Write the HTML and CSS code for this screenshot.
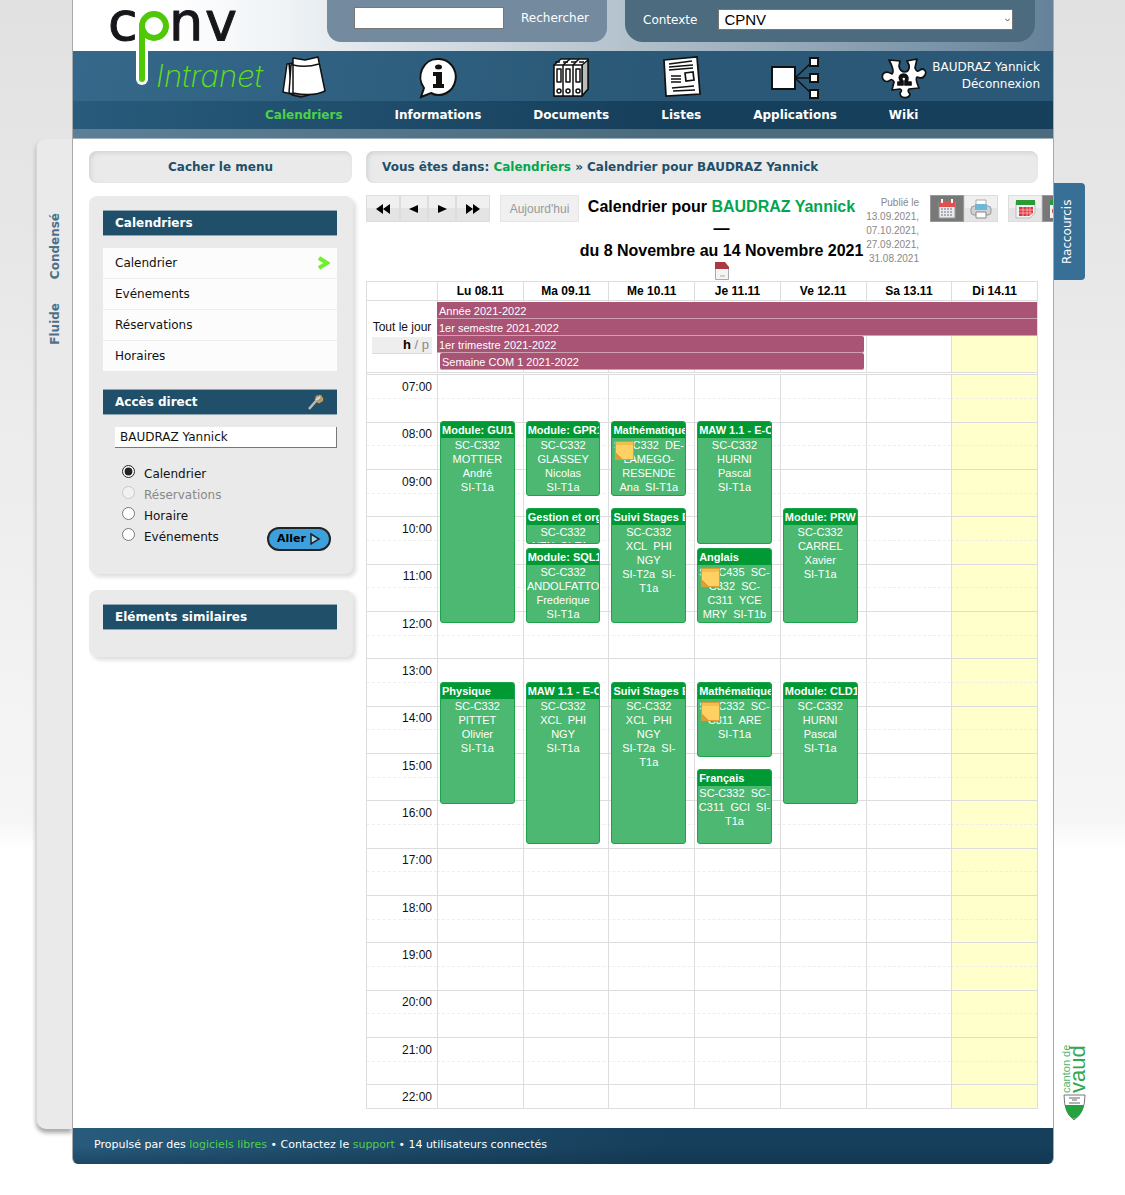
FILE: index.html
```html
<!DOCTYPE html>
<html lang="fr">
<head>
<meta charset="utf-8">
<title>CPNV Intranet - Calendriers</title>
<meta name="viewport" content="width=device-width, initial-scale=1">
<link rel="stylesheet" href="styles.css">
</head>
<body>
<div class="layout">
  <nav class="strip" aria-label="Affichage">
    <a href="#" class="strip-link">Condensé</a>
    <a href="#" class="strip-link">Fluide</a>
  </nav>

  <div class="page">
    <header class="header">
      <a href="#" class="logo" aria-label="CPNV Intranet">
        <svg width="180" height="92" viewBox="0 0 180 92">
          <text class="logo-letters" y="40"><tspan x="3">c</tspan><tspan x="64">n</tspan><tspan x="100">v</tspan></text>
          <path d="M37 26V79" stroke="#fff" stroke-width="12" stroke-linecap="round"/>
          <ellipse cx="49" cy="26" rx="12" ry="12" fill="#fff" stroke="#fff" stroke-width="8"/>
          <ellipse cx="49" cy="26" rx="12" ry="12" fill="none" stroke="#4fc808" stroke-width="6"/>
          <path d="M37 26V79" stroke="#4fc808" stroke-width="6" stroke-linecap="round"/>
          <text class="logo-sub" x="51" y="87">Intranet</text>
        </svg>
      </a>
      <div class="topbar">
        <form class="search">
          <input type="text" class="search-input" aria-label="Recherche">
          <button type="button" class="search-button">Rechercher</button>
        </form>
        <form class="context">
          <label for="contexte">Contexte</label>
          <div class="select-wrap">
            <select id="contexte" class="context-select"><option>CPNV</option></select>
            <svg class="chevron" width="5" height="4" viewBox="0 0 5 4"><path d="M0 .5 2.500 3 5 .5" fill="none" stroke="#555"/></svg>
          </div>
        </form>
      </div>
      <nav class="mainnav" aria-label="Principal">
        <a href="#" class="nav-item current">
          <svg width="46" height="46" viewBox="0 0 46 46" stroke="#111" stroke-width="1.500" stroke-linejoin="round" fill="#fff">
            <path d="M6 10 12 9 14 41 2 38Z"/><path d="M8 10 11 41 20 43 28 41Z" fill="#666"/><path d="M10 11 13 10V40L8 39Z"/><path d="M12 4 24 6 37 3 44 37Q32 43 12 39Z"/><path d="M12 11Q25 14 38 10" fill="none"/>
          </svg>
          <span>Calendriers</span></a>
        <a href="#" class="nav-item">
          <svg width="46" height="46" viewBox="0 0 46 46">
            <path d="M23 5a17 18 0 1 1-7 34L6 43 9 34A17 18 0 0 1 23 5Z" fill="#fff" stroke="#111" stroke-width="2"/>
            <ellipse cx="23.500" cy="13" rx="3.500" ry="2.500" fill="#111"/>
            <path d="M18 18h9v12h2v4H18v-4h3v-8h-3Z" fill="#111"/>
          </svg>
          <span>Informations</span></a>
        <a href="#" class="nav-item">
          <svg width="46" height="46" viewBox="0 0 46 46" fill="#fff" stroke="#111" stroke-width="1.500" stroke-linejoin="round">
            <path d="M6 11 13 5H40V35L34 42H6Z"/><path d="M34 42 40 35V6L34 11Z" fill="#bbb"/><path d="M6 11H34V42H6ZM15 11V42M25 11V42M15 11 22 5M25 11 31 5"/><path d="M9 15h4v13H9ZM18 15h4v13h-4ZM28 15h4v13h-4Z"/><path d="M7 8h32" stroke-dasharray="5 3"/>
            <circle cx="11" cy="37" r="2"/><circle cx="20" cy="37" r="2"/><circle cx="30" cy="37" r="2"/>
          </svg>
          <span>Documents</span></a>
        <a href="#" class="nav-item">
          <svg width="46" height="46" viewBox="0 0 46 46" fill="none" stroke="#111" stroke-width="1.700">
            <path d="M6 6 39 3 42 40 8 42Z" fill="#fff"/><path d="M11 10 34 7M11 13 35 11M11 16 35 14M13 22h10M13 25h10M13 28h10M14 34 36 32M15 37 37 36"/><path d="M27 19 35 18 36 26 28 27Z"/>
          </svg>
          <span>Listes</span></a>
        <a href="#" class="nav-item">
          <svg width="50" height="46" viewBox="0 0 50 46" fill="#fff" stroke="#111" stroke-width="2">
            <path d="M25 24 42 8M25 24H42M25 24 42 40" stroke-width="1.500"/><path d="M2 13H25V35H2ZM40 4h8v8h-8ZM40 20h8v8h-8ZM40 36h8v8h-8Z"/>
          </svg>
          <span>Applications</span></a>
        <a href="#" class="nav-item">
          <svg width="46" height="46" viewBox="0 0 46 46" fill="#fff" stroke="#111" stroke-width="1.700" stroke-linejoin="round">
            <path d="M8 6 19 7 18 12Q19 18 24 18 29 17 28 11L26 7 36 5 34 14Q36 19 39 16C43 13 46 18 44 21 42 25 38 24 36 23Q34 25 38 34L28 35Q26 37 29 40C28 45 19 45 19 39Q22 36 19 35L11 36 13 28Q11 24 8 27C3 29 0 24 2 20 5 16 9 19 11 20Q14 17 8 6Z"/>
            <path d="M17 31V28H20C13 18 31 17 26 28H30V31H24V27C28 21 17 22 22 27V31Z" fill="#111"/>
          </svg>
          <span>Wiki</span></a>
        <div class="user">
          <a href="#">BAUDRAZ Yannick</a>
          <a href="#">Déconnexion</a>
        </div>
      </nav>
    </header>

    <main class="content">
      <div class="bar bar-toggle"><a href="#">Cacher le menu</a></div>
      <div class="bar">Vous êtes dans:&nbsp;<a href="#" class="green">Calendriers</a>&nbsp;» Calendrier pour BAUDRAZ Yannick</div>

      <aside class="sidebar">
        <section class="card">
          <h2 class="card-title">Calendriers</h2>
          <ul class="menu">
            <li><a href="#">Calendrier<svg width="12" height="14" viewBox="0 0 12 14"><path d="M1 2 9 7 1 12" fill="none" stroke="#6df12b" stroke-width="4"/></svg></a></li>
            <li><a href="#">Evénements</a></li>
            <li><a href="#">Réservations</a></li>
            <li><a href="#">Horaires</a></li>
          </ul>
          <h2 class="card-title">Accès direct
            <svg width="18" height="18" viewBox="0 0 18 18"><circle cx="12" cy="6" r="3.500" fill="#999" stroke="#e39a35" stroke-width="1.500" stroke-dasharray="3 1"/><path d="M2 16 9 8" stroke="#bbb" stroke-width="2.500"/><path d="M9 7 13 4" stroke="#ddd" stroke-width="2"/></svg>
          </h2>
          <form class="direct">
            <input type="text" class="direct-input" value="BAUDRAZ Yannick" aria-label="Personne">
            <div class="direct-row">
              <div class="radios">
                <label><input type="radio" name="vue" checked>Calendrier</label>
                <label class="off"><input type="radio" name="vue" disabled>Réservations</label>
                <label><input type="radio" name="vue">Horaire</label>
                <label><input type="radio" name="vue">Evénements</label>
              </div>
              <button type="button" class="go">Aller<svg width="12" height="14" viewBox="0 0 12 14"><path d="M2 2 10 7 2 12Z" fill="#9fd4f5" stroke="#222" stroke-width="1.500"/></svg></button>
            </div>
          </form>
        </section>
        <section class="card card-small">
          <h2 class="card-title">Eléments similaires</h2>
        </section>
      </aside>

      <section class="calendar">
        <div class="toolbar">
          <div class="group arrows">
            <button type="button" aria-label="Année précédente"><svg width="16" height="12" viewBox="0 0 16 12"><path d="M8 1V11L1 6ZM15 1V11L8 6Z"/></svg></button>
            <button type="button" class="narrow" aria-label="Semaine précédente"><svg width="10" height="10" viewBox="0 0 10 10"><path d="M9 1V9L0 5Z"/></svg></button>
            <button type="button" class="narrow" aria-label="Semaine suivante"><svg width="10" height="10" viewBox="0 0 10 10"><path d="M1 1V9L10 5Z"/></svg></button>
            <button type="button" aria-label="Année suivante"><svg width="16" height="12" viewBox="0 0 16 12"><path d="M1 1V11L8 6ZM8 1V11L15 6Z"/></svg></button>
          </div>
          <button type="button" class="today" disabled>Aujourd'hui</button>
          <h1 class="title">Calendrier pour <a href="#" class="green">BAUDRAZ Yannick</a><br>—<br>du 8 Novembre au 14 Novembre 2021<br>
            <svg width="14" height="18" viewBox="0 0 14 18"><path d="M.5 2.500H10L13.500 6V17.500H.5Z" fill="#f4f4f4" stroke="#aaa"/><path d="M0 0H10L14 5V7H0Z" fill="#a93a42"/><path d="M5 14h5" stroke="#aaa"/></svg>
          </h1>
          <p class="published">Publié le<br>13.09.2021,<br>07.10.2021,<br>27.09.2021,<br>31.08.2021</p>
          <div class="group">
            <button type="button" class="on" aria-label="Vue calendrier"><svg width="18" height="20" viewBox="0 0 18 20"><path d="M1 3H17V19H1Z" fill="#e8ecec" stroke="#999"/><path d="M1 2H17V8H1Z" fill="#e2504d"/><path d="M4 0v4M14 0v4" stroke="#fff" stroke-width="2"/><path d="M3 10h12M3 13h12M3 16h12" stroke="#aab" stroke-width="2" stroke-dasharray="2 1"/></svg></button>
            <button type="button" aria-label="Imprimer"><svg width="22" height="20" viewBox="0 0 22 20"><path d="M6 1H16V8H6Z" fill="#fff" stroke="#aaa"/><rect x="1" y="7" width="20" height="9" rx="3" fill="#ccd2d8" stroke="#999"/><path d="M5 5H17V11H5Z" fill="#6fb7d6"/><path d="M6 13H16V19H6Z" fill="#fff" stroke="#888"/></svg></button>
          </div>
          <div class="group">
            <button type="button" aria-label="Mois"><svg width="21" height="20" viewBox="0 0 21 20"><path d="M1 3H20V14L15 19H1Z" fill="#f3f3f3" stroke="#bbb"/><path d="M1 1H20V6H1Z" fill="#2d9a35"/><path d="M4 8H18V14L14 17H4Z" fill="#dc3742"/><path d="M4 11h14M4 14h13M8 8v9M12 8v9M15 8v8" stroke="#f5a5a5"/></svg></button>
            <button type="button" class="on" aria-label="Semaine"><svg width="21" height="20" viewBox="0 0 21 20"><path d="M1 3H20V14L15 19H1Z" fill="#f3f3f3"/><path d="M1 1H20V6H1Z" fill="#2d9a35"/><circle cx="6" cy="12" r="3" fill="#dc3742"/></svg></button>
          </div>
        </div>

        <table class="days">
          <thead>
            <tr><td class="time"></td><th>Lu 08.11</th><th>Ma 09.11</th><th>Me 10.11</th><th>Je 11.11</th><th>Ve 12.11</th><th>Sa 13.11</th><th>Di 14.11</th></tr>
          </thead>
          <tbody>
            <tr>
              <th class="time allday">Tout le jour<span class="hp"><b>h</b> / p</span></th>
              <td colspan="7" class="allday-cell">
                <div class="allday-grid">
                  <i class="line d1"></i><i class="line d2"></i><i class="line d3"></i><i class="line d4"></i><i class="line d5"></i><i class="line d6"></i><i class="line d7 sun"></i>
                  <a href="#" class="bar-event r1">Année 2021-2022</a>
                  <a href="#" class="bar-event r2">1er semestre 2021-2022</a>
                  <a href="#" class="bar-event r3">1er trimestre 2021-2022</a>
                  <a href="#" class="bar-event r4">Semaine COM 1 2021-2022</a>
                </div>
              </td>
            </tr>
          </tbody>
        </table>

        <div class="agenda">
          <table class="slots">
            <tbody>
              <tr><th>07:00</th><td colspan="6"></td><td class="sun"></td></tr><tr><th></th><td colspan="6"></td><td class="sun"></td></tr>
              <tr><th>08:00</th><td colspan="6"></td><td class="sun"></td></tr><tr><th></th><td colspan="6"></td><td class="sun"></td></tr>
              <tr><th>09:00</th><td colspan="6"></td><td class="sun"></td></tr><tr><th></th><td colspan="6"></td><td class="sun"></td></tr>
              <tr><th>10:00</th><td colspan="6"></td><td class="sun"></td></tr><tr><th></th><td colspan="6"></td><td class="sun"></td></tr>
              <tr><th>11:00</th><td colspan="6"></td><td class="sun"></td></tr><tr><th></th><td colspan="6"></td><td class="sun"></td></tr>
              <tr><th>12:00</th><td colspan="6"></td><td class="sun"></td></tr><tr><th></th><td colspan="6"></td><td class="sun"></td></tr>
              <tr><th>13:00</th><td colspan="6"></td><td class="sun"></td></tr><tr><th></th><td colspan="6"></td><td class="sun"></td></tr>
              <tr><th>14:00</th><td colspan="6"></td><td class="sun"></td></tr><tr><th></th><td colspan="6"></td><td class="sun"></td></tr>
              <tr><th>15:00</th><td colspan="6"></td><td class="sun"></td></tr><tr><th></th><td colspan="6"></td><td class="sun"></td></tr>
              <tr><th>16:00</th><td colspan="6"></td><td class="sun"></td></tr><tr><th></th><td colspan="6"></td><td class="sun"></td></tr>
              <tr><th>17:00</th><td colspan="6"></td><td class="sun"></td></tr><tr><th></th><td colspan="6"></td><td class="sun"></td></tr>
              <tr><th>18:00</th><td colspan="6"></td><td class="sun"></td></tr><tr><th></th><td colspan="6"></td><td class="sun"></td></tr>
              <tr><th>19:00</th><td colspan="6"></td><td class="sun"></td></tr><tr><th></th><td colspan="6"></td><td class="sun"></td></tr>
              <tr><th>20:00</th><td colspan="6"></td><td class="sun"></td></tr><tr><th></th><td colspan="6"></td><td class="sun"></td></tr>
              <tr><th>21:00</th><td colspan="6"></td><td class="sun"></td></tr><tr><th></th><td colspan="6"></td><td class="sun"></td></tr>
              <tr><th>22:00</th><td colspan="6"></td><td class="sun"></td></tr>
            </tbody>
          </table>
          <!-- Each day is cut into 5-minute rows counted from 07:00 -->
          <div class="columns">
            <div class="day">
              <article class="event" style="grid-row:13/64"><h3>Module: GUI1</h3><p>SC-C332<br>MOTTIER<br>André<br>SI-T1a</p></article>
              <article class="event" style="grid-row:79/110"><h3>Physique</h3><p>SC-C332<br>PITTET<br>Olivier<br>SI-T1a</p></article>
            </div>
            <div class="day">
              <article class="event" style="grid-row:13/32"><h3>Module: GPR1</h3><p>SC-C332<br>GLASSEY<br>Nicolas<br>SI-T1a</p></article>
              <article class="event" style="grid-row:35/44"><h3>Gestion et org</h3><p>SC-C332<br>YZN&nbsp; SI-T1a</p></article>
              <article class="event" style="grid-row:45/64"><h3>Module: SQL1</h3><p>SC-C332<br>ANDOLFATTO<br>Frederique<br>SI-T1a</p></article>
              <article class="event" style="grid-row:79/120"><h3>MAW 1.1 - E-C</h3><p>SC-C332<br>XCL&nbsp; PHI<br>NGY<br>SI-T1a</p></article>
            </div>
            <div class="day">
              <article class="event noted" style="grid-row:13/32"><h3>Mathématique</h3><p>SC-C332&nbsp; DE-<br>LAMEGO-<br>RESENDE<br>Ana&nbsp; SI-T1a</p></article>
              <article class="event" style="grid-row:35/64"><h3>Suivi Stages E</h3><p>SC-C332<br>XCL&nbsp; PHI<br>NGY<br>SI-T2a&nbsp; SI-<br>T1a</p></article>
              <article class="event" style="grid-row:79/120"><h3>Suivi Stages E</h3><p>SC-C332<br>XCL&nbsp; PHI<br>NGY<br>SI-T2a&nbsp; SI-<br>T1a</p></article>
            </div>
            <div class="day">
              <article class="event" style="grid-row:13/44"><h3>MAW 1.1 - E-C</h3><p>SC-C332<br>HURNI<br>Pascal<br>SI-T1a</p></article>
              <article class="event noted" style="grid-row:45/64"><h3>Anglais</h3><p>SC-C435&nbsp; SC-<br>C332&nbsp; SC-<br>C311&nbsp; YCE<br>MRY&nbsp; SI-T1b</p></article>
              <article class="event noted" style="grid-row:79/98"><h3>Mathématique</h3><p>SC-C332&nbsp; SC-<br>C311&nbsp; ARE<br>SI-T1a</p></article>
              <article class="event" style="grid-row:101/120"><h3>Français</h3><p>SC-C332&nbsp; SC-<br>C311&nbsp; GCI&nbsp; SI-<br>T1a</p></article>
            </div>
            <div class="day">
              <article class="event" style="grid-row:35/64"><h3>Module: PRW</h3><p>SC-C332<br>CARREL<br>Xavier<br>SI-T1a</p></article>
              <article class="event" style="grid-row:79/110"><h3>Module: CLD1</h3><p>SC-C332<br>HURNI<br>Pascal<br>SI-T1a</p></article>
            </div>
            <div class="day"></div>
            <div class="day"></div>
          </div>
        </div>
      </section>
    </main>

    <footer class="footer">Propulsé par des <a href="#">logiciels libres</a> • Contactez le <a href="#">support</a> • 14 utilisateurs connectés</footer>
  </div>

  <div class="right">
    <a href="#" class="shortcuts">Raccourcis</a>
    <svg class="vaud" width="26" height="78" viewBox="0 0 26 78">
      <text class="vaud-small" transform="translate(8 50) rotate(-90)">canton de</text>
      <text class="vaud-big" transform="translate(23 50) rotate(-90)">vaud</text>
      <path d="M2 52H23Q23 70 12 77 2 70 2 52Z" fill="#fff" stroke="#777"/>
      <path d="M3 62H22Q20 72 12 76 4 72 3 62Z" fill="#23a33f"/>
      <path d="M7 55h11M10 57h5M7 60h11" stroke="#666"/>
    </svg>
  </div>
</div>
</body>
</html>
```
FILE: styles.css
```css
* { box-sizing: border-box; }
body {
  margin: 0;
  font: 12px/16px "DejaVu Sans", Verdana, sans-serif;
  color: #111;
  background: #fff linear-gradient(#e1e1e1, #f6f6f6 820px, #fff 850px) no-repeat;
}
a { color: inherit; text-decoration: none; }
h1, h2, h3, p, ul { margin: 0; padding: 0; }
button, input, select { font: inherit; color: inherit; }
.green { color: #00a650; }

.layout {
  display: grid;
  grid-template-columns: 36px minmax(0, 1fr) 71px;
  padding: 0 0 31px 36px;
}

/* Left strip */
.strip {
  margin: 139px 0 35px;
  padding-top: 74px;
  display: flex;
  flex-direction: column;
  align-items: center;
  gap: 24px;
  background: #eaeaea;
  border-left: 1px solid #d8d8d8;
  border-radius: 8px 0 0 10px;
  box-shadow: 0 4px 4px #aaa;
}
.strip-link {
  writing-mode: vertical-rl;
  transform: rotate(180deg);
  font-weight: bold;
  font-size: 12px;
  color: #4d7188;
}

/* Header */
.page { position: relative; background: #fff; border: solid #aaa; border-width: 0 1px; border-radius: 0 0 6px 6px; overflow: hidden; }
.header { background: linear-gradient(90deg, #fff 10%, #eef2f5 22%, #a9bac6 62%, #66829a); }
.logo { position: absolute; left: 32px; top: 0; }
.logo svg { display: block; overflow: visible; }
.logo-letters { font: 54px "DejaVu Sans", sans-serif; fill: #17171b; stroke: #17171b; stroke-width: 1px; stroke-linejoin: round; }
.logo-sub { font: italic 200 31px Inter, sans-serif; fill: #5fe01c; }
.topbar { display: flex; justify-content: flex-end; gap: 18px; height: 51px; padding-right: 18px; }
.search, .context { height: 42px; display: flex; color: #fff; }
.search { width: 280px; padding: 7px 18px 0 27px; gap: 17px; align-items: flex-start; background: #748a9e; border-radius: 0 0 14px 14px; }
.search-input { flex: 1; min-width: 0; height: 22px; border: 1px solid #777; background: #fff; padding: 0 4px; }
.search-button { padding: 3px 0; border: 0; background: none; }
.context { width: 410px; padding: 9px 22px 0 18px; gap: 21px; background: #4c6b7e; border-radius: 0 0 18px 18px; }
.context label { padding-top: 3px; }
.select-wrap { position: relative; flex: 1; height: 21px; }
.context-select { appearance: none; width: 100%; height: 21px; padding: 0 5px; border: 1px solid #777; border-radius: 0; background: #fff; color: #000; font: 15px/18px "Liberation Sans", Arial, sans-serif; }
.chevron { position: absolute; right: 3px; top: 9px; }
.mainnav {
  display: flex;
  gap: 52px;
  height: 88px;
  padding: 0 13px 0 192px;
  color: #fff;
  border-bottom: 1px solid #9fb0bc;
  background:
    linear-gradient(90deg, #5d7f96, #4c6b7e 60%) 0 78px / 100% 10px no-repeat,
    linear-gradient(100deg, #285b7c, #163f5b 60%) 0 50px / 100% 28px no-repeat,
    linear-gradient(100deg, #35688a, #2a5876 60%);
}
.nav-item { display: flex; flex-direction: column; align-items: center; font-weight: bold; }
.nav-item svg { margin: 3px -10px 0; height: 46px; }
.nav-item span { padding-top: 7px; }
.current span { color: #4fd04a; }
.user { flex: 1; margin-left: -52px; padding-top: 8px; display: flex; flex-direction: column; align-items: flex-end; line-height: 17px; white-space: nowrap; }

/* Content */
.content {
  display: grid;
  grid-template-columns: 263px minmax(0, 1fr);
  gap: 12px 14px;
  padding: 12px 15px 19px 16px;
  align-items: start;
}
.bar { height: 32px; padding: 8px 16px; background: #eaeaea; border-radius: 8px; box-shadow: inset 2px 2px 4px #d4d4d4; color: #1f4f69; font-weight: bold; white-space: nowrap; }
.bar-toggle { text-align: center; }
.sidebar { display: grid; gap: 16px; padding-top: 1px; }
.card { padding: 14px 16px 23px 14px; background: #eaeaea; border-radius: 8px; box-shadow: 3px 3px 4px #ddd; }
.card-small { padding-bottom: 27px; }
.card-title { display: flex; justify-content: space-between; align-items: center; height: 26px; padding: 0 12px; background: #1f4f69; border: solid #8fa5b2; border-width: 1px 0; color: #fff; font-size: 12px; }
.menu { list-style: none; margin: 12px 0 18px; }
.menu a { display: flex; justify-content: space-between; align-items: center; height: 30px; padding: 0 7px 0 12px; background: #fcfcfc; }
.menu li + li { border-top: 1px solid #eee; }
.direct { padding: 12px 0 0 12px; }
.direct-input { display: block; width: 222px; height: 21px; padding: 0 5px; border: solid #777; border-width: 0 1px 1px 0; background: #fff; }
.direct-row { display: flex; justify-content: space-between; align-items: flex-end; padding: 14px 6px 0 0; }
.radios { display: flex; flex-direction: column; padding-bottom: 5px; }
.radios label { display: flex; height: 21px; gap: 9px; align-items: flex-start; line-height: 24px; }
.radios input { width: 13px; height: 13px; margin: 3px 0 0 7px; accent-color: #222; }
.off { color: #888; }
.go { display: flex; align-items: center; justify-content: center; gap: 3px; width: 64px; height: 24px; padding: 0; border: 2px solid #222; border-radius: 12px; background: #3da0dd; font-size: 11px; font-weight: bold; color: #000; }

/* Calendar toolbar */
.calendar { font-family: "Liberation Sans", Arial, sans-serif; }
.toolbar { display: flex; align-items: flex-start; height: 86px; margin-right: -15px; overflow: hidden; }
.toolbar > * { flex-shrink: 0; }
.group { display: flex; height: 27px; }
.group button { display: flex; align-items: center; justify-content: center; width: 34px; padding: 0; border: 1px solid #ddd; background: linear-gradient(#f0f0f0 50%, #e4e4e4 50%); }
.group .narrow { width: 28px; }
.group .on { background: #787878; border-color: #999; }
.today { width: 79px; height: 27px; margin: 0 0 0 10px; padding: 0; border: 1px solid #e6e6e6; background: #f0f0f0; color: #999; font-size: 12px; }
.title { width: 285px; padding-top: 1px; color: #000; font-size: 16px; line-height: 22px; text-align: center; white-space: nowrap; }
.published { width: 55px; margin-right: 11px; padding-top: 1px; text-align: right; color: #888; font-size: 10px; line-height: 14px; }
.published + .group { margin-right: 10px; }

/* Week grid */
table { width: 100%; table-layout: fixed; border-collapse: separate; border-spacing: 0; }
th, td { padding: 0; }
.days { border: solid #ddd; border-width: 1px 1px 0 1px; }
.days thead th { height: 18px; border-left: 1px solid #ddd; font-size: 12px; line-height: 17px; color: #000; }
.time { width: 70px; }
.allday { border-top: 1px solid #ddd; font-weight: normal; }
.hp { display: block; margin: 2px 5px 0 5px; padding-right: 3px; background: #eee; text-align: right; color: #888; font-size: 13px; border-bottom: 1px solid #ddd; }
.hp b { color: #000; }
.allday-cell { border-top: 1px solid #ddd; }
.allday-grid { display: grid; grid-template-columns: repeat(7, minmax(0, 1fr)); grid-template-rows: repeat(4, 17px); padding: 1px 0 2px; }
.line { grid-row: 1 / 5; border-left: 1px solid #ddd; margin: -1px 0 -2px; }
.d1 { grid-column: 1; } .d2 { grid-column: 2; } .d3 { grid-column: 3; } .d4 { grid-column: 4; }
.d5 { grid-column: 5; } .d6 { grid-column: 6; } .d7 { grid-column: 7; }
.sun { background: #ffffcc; }
.bar-event { padding: 1px 2px 0; background: #a95375; border-bottom: 1px solid #cf9fb2; color: #fff; font-size: 11px; line-height: 16px; white-space: nowrap; }
.r1 { grid-area: 1 / 1 / 2 / 8; } .r2 { grid-area: 2 / 1 / 3 / 8; }
.r3 { grid-area: 3 / 1 / 4 / 6; margin-right: 2px; border-radius: 0 2px 2px 0; }
.r4 { grid-area: 4 / 1 / 5 / 6; margin-right: 2px; margin-left: 3px; border-radius: 2px; }
.agenda { display: grid; border: 1px solid #ddd; padding-top: 1px; }
.slots, .columns { grid-area: 1 / 1; }
.slots th { width: 70px; font-weight: normal; font-size: 12px; line-height: 14px; text-align: right; padding-right: 5px; }
.slots th, .slots td { height: 24px; border-top: 1px solid #ddd; }
.slots tr:nth-child(3n) > * { height: 23px; }
.slots tr:nth-child(even) > * { border-top: 1px dashed #eee; }
.columns { contain: size; display: grid; grid-template-columns: repeat(7, minmax(0, 1fr)); grid-template-rows: minmax(0, 1fr); margin-left: 70px; }
.day { display: grid; grid-template-rows: repeat(186, minmax(0, 1fr)); min-height: 0; border-left: 1px solid #ddd; padding: 0 8px 0 2px; }
.event { position: relative; min-height: 0; overflow: hidden; border: 1px solid #1aa348; border-radius: 3px; background: #4db871; color: #fff; font-size: 11px; line-height: 14px; white-space: nowrap; }
.event h3 { height: 16px; padding-left: 1px; background: #009933; font-size: 11px; line-height: 17px; overflow: hidden; }
.event p { text-align: center; }
.noted::after { content: ""; position: absolute; left: 3px; top: 19px; width: 17px; height: 17px; border: 1px solid #dd9d35; background: linear-gradient(45deg, #dd9d35 20%, transparent 20%), linear-gradient(#f3bf4c 20%, #ffd163 20%); }

/* Footer */
.footer { height: 36px; padding: 9px 21px; background: linear-gradient(transparent 50%, #0d2c4466), linear-gradient(100deg, #285b7c, #163f5b 60%); color: #fff; font-size: 11px; }
.footer a { color: #4fd04a; }

/* Right column */
.right { display: flex; flex-direction: column; justify-content: space-between; align-items: flex-start; padding: 183px 0 43px; }
.shortcuts { writing-mode: vertical-rl; transform: rotate(180deg); height: 97px; width: 31px; line-height: 27px; text-align: center; background: #376f96; color: #fff; border-radius: 4px 0 0 4px; }
.vaud { margin-left: 8px; }
.vaud-small { font: 11px "Liberation Sans", Arial, sans-serif; fill: #4fb56a; }
.vaud-big { font: 22px "Liberation Sans", Arial, sans-serif; fill: #35a852; }
```
